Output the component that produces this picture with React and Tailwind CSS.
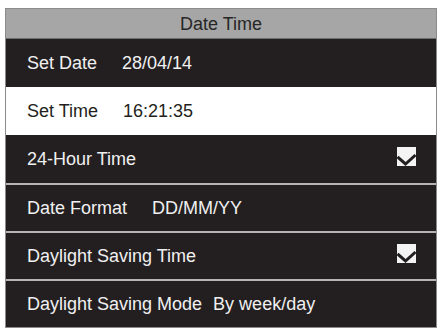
import React from 'react';

const Check = () => (
  <svg width="19" height="19" viewBox="0 0 19 19" className="mb-[5px]">
    <rect x="0" y="0" width="19" height="19" fill="#f4f4f4" />
    <path d="M0.5 10 L8.5 17 L18.5 8" fill="none" stroke="#231f20" strokeWidth="3" />
  </svg>
);

const Row = ({ label, value, gap = 'ml-[25px]', checked, line, white }) => (
  <div
    className={`flex items-center justify-between h-[48px] pl-[21px] pr-[20px] ${
      white ? 'bg-white text-[#231f20]' : 'bg-[#231f20] text-[#f0f0f0]'
    } ${line ? 'border-t-2 border-[#b4b4b4]' : ''}`}
  >
    <div className="flex items-center">
      <span>{label}</span>
      {value && <span className={gap}>{value}</span>}
    </div>
    {checked && <Check />}
  </div>
);

export default function App() {
  const rows = [
    { label: 'Set Date', value: '28/04/14' },
    { label: 'Set Time', value: '16:21:35', white: true },
    { label: '24-Hour Time', checked: true },
    { label: 'Date Format', value: 'DD/MM/YY', line: true },
    { label: 'Daylight Saving Time', checked: true, line: true },
    { label: 'Daylight Saving Mode', value: 'By week/day', gap: 'ml-[11px]', line: true },
  ];

  return (
    <div className="w-[443px] h-[332px] bg-white pt-[8px] pl-[5px] font-['Liberation_Sans',Arial,sans-serif] text-[18px] leading-none">
      <div className="w-[432px] border-[1.5px] border-[#8c8c8c]">
        <div className="h-[30px] pt-[1px] flex items-center justify-center bg-[#a6a6a6] text-[#262626] border-b border-[#6e6e6e]">
          Date Time
        </div>
        {rows.map((r) => (
          <Row key={r.label} {...r} />
        ))}
      </div>
    </div>
  );
}
